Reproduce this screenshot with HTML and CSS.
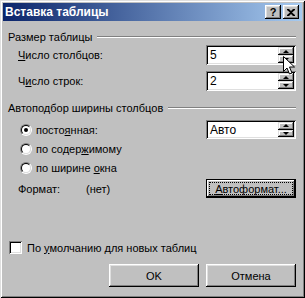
FILE: index.html
```html
<!DOCTYPE html>
<html lang="ru">
<head>
    <meta charset="UTF-8">
    <title>Вставка таблицы</title>
    <link rel="stylesheet" href="styles.css">
</head>
<body>
    <div class="dialog">
        <div class="titlebar">
            <span class="title-text">Вставка таблицы</span>
            <span class="title-btn help">?</span>
            <span class="title-btn close">
                <svg width="8" height="7" viewBox="0 0 8 7"><path d="M0 0h2l2 2 2-2h2v1L5 3.5 8 6v1H6L4 5 2 7H0V6l3-2.5L0 1z" fill="#000"/></svg>
            </span>
        </div>

        <div class="content">
            <div class="group-title">Размер таблицы</div>
            <div class="size-grid">
                <label class="field-label"><u>Ч</u>исло столбцов:</label>
                <div class="spin">
                    <span class="spin-value">5</span>
                    <span class="spin-btns"><span class="spin-btn up"></span><span class="spin-btn down"></span></span>
                </div>
                <label class="field-label">Ч<u>и</u>сло строк:</label>
                <div class="spin">
                    <span class="spin-value">2</span>
                    <span class="spin-btns"><span class="spin-btn up"></span><span class="spin-btn down"></span></span>
                </div>
            </div>

            <div class="group-title second">Автоподбор ширины столбцов</div>
            <div class="fit-grid">
                <label class="radio-row"><span class="radio checked"></span><span>посто<u>я</u>нная:</span></label>
                <div class="spin">
                    <span class="spin-value">Авто</span>
                    <span class="spin-btns"><span class="spin-btn up"></span><span class="spin-btn down"></span></span>
                </div>
                <label class="radio-row"><span class="radio"></span><span>по содер<u>ж</u>имому</span></label>
                <span></span>
                <label class="radio-row"><span class="radio"></span><span>по ширине <u>о</u>кна</span></label>
                <span></span>
            </div>
            <div class="format-row">
                <span class="format-label">Формат:</span>
                <span class="format-value">(нет)</span>
                <button class="btn default"><span class="focus"><span><u>А</u>втоформат...</span></span></button>
            </div>

            <label class="check-row"><span class="checkbox"></span><span>По <u>у</u>молчанию для новых таблиц</span></label>

            <div class="actions">
                <button class="btn">OK</button>
                <button class="btn">Отмена</button>
            </div>
        </div>

        <svg class="cursor" width="13" height="20" viewBox="0 0 13 20">
            <path d="M0.5 0.5v15l3.5-3.5 2.5 6 2.5-1-2.5-6h5z" fill="#fff" stroke="#000" stroke-width="1"/>
        </svg>
    </div>
</body>
</html>
```

FILE: styles.css
```css
body {
    margin: 0;
    font-family: "Liberation Sans", Arial, sans-serif;
    font-size: 11px;
    color: #000;
    background: #c0c0c0;
}
.dialog {
    position: relative;
    width: 305px;
    height: 298px;
    box-sizing: border-box;
    padding: 3px;
    background: #c0c0c0;
    display: flex;
    flex-direction: column;
    box-shadow: inset 1px 1px #dfdfdf, inset -1px -1px #000, inset 2px 2px #fff, inset -2px -2px #808080;
}
.titlebar {
    height: 18px;
    display: flex;
    align-items: center;
    padding: 0 3px 0 2px;
    background: linear-gradient(to right, #0a246a, #a6caf0);
    color: #fff;
    font-weight: bold;
    font-size: 12px;
}
.title-text {
    flex: 1;
}
.title-btn {
    width: 16px;
    height: 14px;
    display: flex;
    align-items: center;
    justify-content: center;
    background: #c0c0c0;
    color: #000;
    font-size: 11px;
    box-shadow: inset -1px -1px #000, inset 1px 1px #fff, inset -2px -2px #808080, inset 2px 2px #dfdfdf;
}
.title-btn.close {
    margin-left: 2px;
}
.content {
    flex: 1;
    display: flex;
    flex-direction: column;
    padding: 0 6px 0 5px;
}
.group-title {
    display: flex;
    align-items: center;
    height: 14px;
    margin-top: 9px;
    white-space: nowrap;
}
.group-title::after {
    content: "";
    flex: 1;
    margin-left: 5px;
    border-top: 1px solid #808080;
    border-bottom: 1px solid #fff;
}
.group-title.second {
    margin-top: 10px;
}
.size-grid {
    display: grid;
    grid-template-columns: 1fr 90px;
    grid-template-rows: 20px 20px;
    row-gap: 6px;
    margin-top: 1px;
    padding-left: 10px;
    align-items: center;
}
.field-label {
    white-space: nowrap;
}
.spin {
    height: 100%;
    box-sizing: border-box;
    padding: 2px;
    display: flex;
    background: #fff;
    box-shadow: inset 1px 1px #808080, inset -1px -1px #fff, inset 2px 2px #000, inset -2px -2px #dfdfdf;
}
.spin-value {
    flex: 1;
    display: flex;
    align-items: center;
    padding-left: 2px;
    font-size: 12px;
}
.spin-btns {
    width: 16px;
    display: flex;
    flex-direction: column;
}
.spin-btn {
    flex: 1;
    display: flex;
    align-items: center;
    justify-content: center;
    background: #c0c0c0;
    box-shadow: inset -1px -1px #000, inset 1px 1px #dfdfdf, inset -2px -2px #808080, inset 2px 2px #fff;
}
.spin-btn::before {
    content: "";
    border-left: 3px solid transparent;
    border-right: 3px solid transparent;
}
.spin-btn.up::before {
    border-bottom: 3px solid #000;
}
.spin-btn.down::before {
    border-top: 3px solid #000;
}
.fit-grid {
    display: grid;
    grid-template-columns: 1fr 90px;
    grid-template-rows: 19px 19px 19px;
    margin-top: 5px;
    padding-left: 10px;
    align-items: center;
}
.radio-row {
    display: flex;
    align-items: center;
    white-space: nowrap;
}
.radio {
    width: 12px;
    height: 12px;
    box-sizing: border-box;
    margin: 0 4px 0 2px;
    border-radius: 50%;
    border: 1px solid;
    border-color: #808080 #fff #fff #808080;
    display: flex;
    align-items: center;
    justify-content: center;
    position: relative;
}
.radio::before {
    content: "";
    position: absolute;
    inset: 0;
    border-radius: 50%;
    border: 1px solid;
    border-color: #000 #dfdfdf #dfdfdf #000;
    background: #fff;
}
.radio.checked::after {
    content: "";
    position: relative;
    width: 4px;
    height: 4px;
    border-radius: 50%;
    background: #000;
}
.format-row {
    display: flex;
    align-items: center;
    height: 19px;
    margin-top: 2px;
    padding-left: 10px;
}
.format-label {
    width: 68px;
}
.format-value {
    flex: 1;
}
.btn {
    width: 90px;
    height: 23px;
    padding: 0;
    border: none;
    font-family: inherit;
    font-size: 11px;
    font-weight: normal;
    color: #000;
    background: #c0c0c0;
    box-shadow: inset -1px -1px #000, inset 1px 1px #fff, inset -2px -2px #808080, inset 2px 2px #dfdfdf;
}
.btn.default {
    height: 19px;
    padding: 3px;
    border: 1px solid #000;
    display: flex;
    box-shadow: inset -1px -1px #000, inset 1px 1px #fff, inset -2px -2px #808080;
}
.focus {
    flex: 1;
    display: flex;
    align-items: center;
    justify-content: center;
    outline: 1px dotted #000;
    white-space: nowrap;
}
.check-row {
    display: flex;
    align-items: center;
    height: 13px;
    margin-top: 43px;
    padding-left: 1px;
    white-space: nowrap;
}
.checkbox {
    width: 13px;
    height: 13px;
    box-sizing: border-box;
    margin-right: 5px;
    background: #fff;
    box-shadow: inset 1px 1px #808080, inset -1px -1px #fff, inset 2px 2px #000, inset -2px -2px #dfdfdf;
}
.actions {
    display: flex;
    justify-content: flex-end;
    gap: 7px;
    margin-top: 10px;
}
.cursor {
    position: absolute;
    left: 283px;
    top: 56px;
}
```
